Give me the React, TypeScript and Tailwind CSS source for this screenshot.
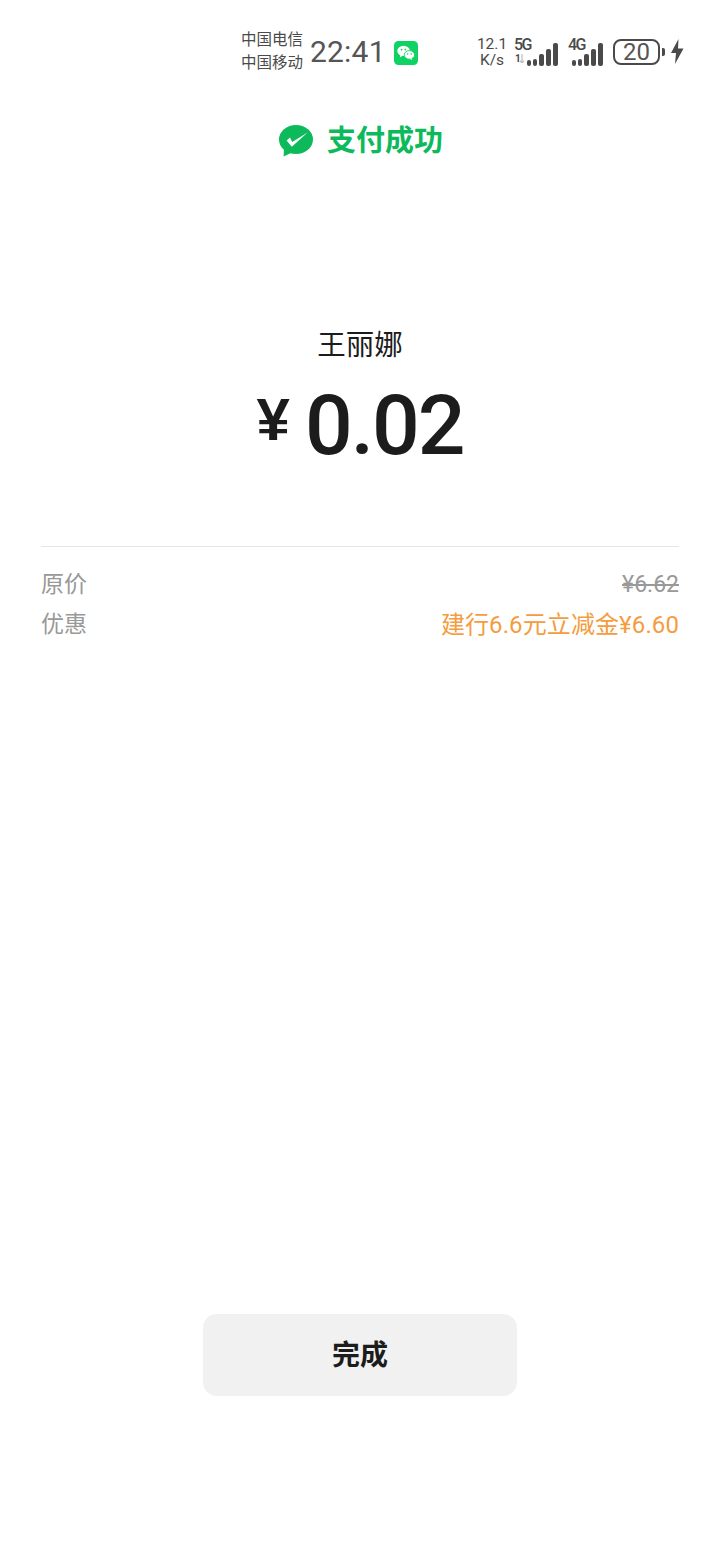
import React from "react";

const CJK = `"Roboto","Noto Sans CJK SC",sans-serif`;

function Signal({ bars, widths, className }: { bars: number[]; widths: number[]; className?: string }) {
  return (
    <div className={`flex items-end ${className ?? ""}`}>
      {bars.map((h, i) => (
        <div key={i} className="rounded-[2px] bg-[#4a4a4a]" style={{ height: h, width: widths[i] }} />
      ))}
    </div>
  );
}

function WeChatTile() {
  return (
    <svg width="24" height="24" viewBox="0 0 24 24" className="mt-[2px] -ml-[1px]">
      <rect width="24" height="24" rx="4.5" fill="#0fd263" />
      <ellipse cx="9.6" cy="9.9" rx="6.3" ry="5.2" fill="#fff" />
      <path d="M6.3 13.6 L6 16.2 L9 14.6Z" fill="#fff" />
      <ellipse cx="15.4" cy="13.9" rx="5.2" ry="4.3" fill="#fff" stroke="#0fd263" strokeWidth="0.9" />
      <path d="M17.6 17.2 L18.3 19 L15.9 17.9Z" fill="#fff" />
      <circle cx="7.6" cy="8.6" r="0.9" fill="#0fd263" />
      <circle cx="11.4" cy="8.6" r="0.9" fill="#0fd263" />
      <circle cx="13.6" cy="12.9" r="0.75" fill="#0fd263" />
      <circle cx="17.2" cy="12.9" r="0.75" fill="#0fd263" />
    </svg>
  );
}

function PayLogo() {
  return (
    <svg width="36" height="33" viewBox="0 0 36 33">
      <ellipse cx="18" cy="14.5" rx="17" ry="14.5" fill="#0cba5b" />
      <path d="M6 23 L5.6 31.6 L14 27.5Z" fill="#0cba5b" />
      <path d="M8.6 15.4 L12 12.4 L14.2 17 L29.6 7.6 L13.8 21.8 Z" fill="#fff" />
    </svg>
  );
}

export default function App() {
  return (
    <div
      className="flex h-[1560px] w-[720px] flex-col items-center bg-white"
      style={{ fontFamily: CJK }}
    >
      <div className="mt-[28px] flex h-[47px] w-full items-center pl-[241px] text-[#4a4a4a]">
        <div className="mt-[1px] flex w-[64px] flex-col text-[15.5px] leading-[23px]">
          <span>中国电信</span>
          <span>中国移动</span>
        </div>
        <span className="ml-[5px] mt-[1px] w-[85px] text-[30px] font-[450] leading-[36px] tracking-[0.2px] text-[#555555]">22:41</span>
        <WeChatTile />
        <div className="ml-[58px] mt-[1px] flex w-[32px] flex-col items-center text-[15.5px] leading-[16px]">
          <span>12.1</span>
          <span>K/s</span>
        </div>
        <div className="relative ml-[6px] h-[26px] w-[44px]">
          <span className="absolute left-0 top-[-3px] text-[16px] font-medium leading-[18px] tracking-[-1.5px]">5G</span>
          <span className="absolute left-[1px] top-[14px] text-[10px] font-bold leading-[11px]">1</span>
          <svg width="4" height="9" viewBox="0 0 4 9" className="absolute left-[6px] top-[15px]">
            <path d="M2 0V9M0 6.5L2 9L4 6.5" stroke="#bdbdbd" strokeWidth="1.2" fill="none" />
          </svg>
          <Signal
            bars={[6, 7, 12, 17, 23]}
            widths={[4, 4, 5, 5, 5]}
            className="absolute bottom-[-1px] right-0 gap-[2px]"
          />
        </div>
        <div className="relative ml-[10px] h-[26px] w-[35px]">
          <span className="absolute left-0 top-[-3px] text-[16px] font-medium leading-[18px] tracking-[-1.5px]">4G</span>
          <Signal
            bars={[6, 7, 12, 17, 23]}
            widths={[4, 4, 5, 5, 5]}
            className="absolute bottom-[-1px] right-0 gap-[2px]"
          />
        </div>
        <div className="ml-[10px] flex h-[26px] w-[47px] items-center justify-center rounded-[8px] border-2 border-[#4a4a4a] text-[24px] font-[450] leading-none text-[#555555]">
          20
        </div>
        <div className="ml-[2px] h-[8px] w-[3px] rounded-r-[2px] bg-[#4a4a4a]" />
        <svg width="14" height="25" viewBox="0 0 14 25" className="ml-[5px]">
          <path d="M8.5 0 L1 14 L6 14 L5 25 L13.5 9.5 L8 9.5Z" fill="#4a4a4a" />
        </svg>
      </div>

      <div className="mt-[48px] flex w-full items-center justify-center pl-[1px]">
        <PayLogo />
        <span className="ml-[13px] text-[29px] font-bold leading-[36px] text-[#0cba5b]">支付成功</span>
      </div>

      <div className="mt-[169px] text-[28.5px] leading-[36px] text-[#1c1c1c]">王丽娜</div>
      <div className="mt-[14px] flex items-start text-[#1c1c1c]">
        <span
          className="mt-[12px] text-[60px] font-bold leading-[60px]"
          style={{ fontFamily: `"Liberation Sans",sans-serif` }}
        >
          ¥
        </span>
        <span className="ml-[15px] text-[84px] font-medium leading-[96px] tracking-[-2px]">0.02</span>
      </div>

      <div className="mt-[72px] h-px w-[638px] bg-[#e5e5e5]" />
      <div className="mt-[18px] flex w-[638px] items-center justify-between text-[23px] leading-[40px] text-[#999999]">
        <span>原价</span>
        <span className="line-through">¥6.62</span>
      </div>
      <div className="flex w-[638px] items-center justify-between text-[23px] leading-[40px] text-[#999999]">
        <span>优惠</span>
        <span className="text-[24px] font-normal tracking-[0.1px] text-[#f59c40]">建行6.6元立减金¥6.60</span>
      </div>

      <div className="mt-[669px] flex h-[82px] w-[314px] items-center justify-center rounded-[14px] bg-[#f1f1f1] pt-[2px] text-[28px] font-bold text-[#1c1c1c]">
        完成
      </div>
    </div>
  );
}
